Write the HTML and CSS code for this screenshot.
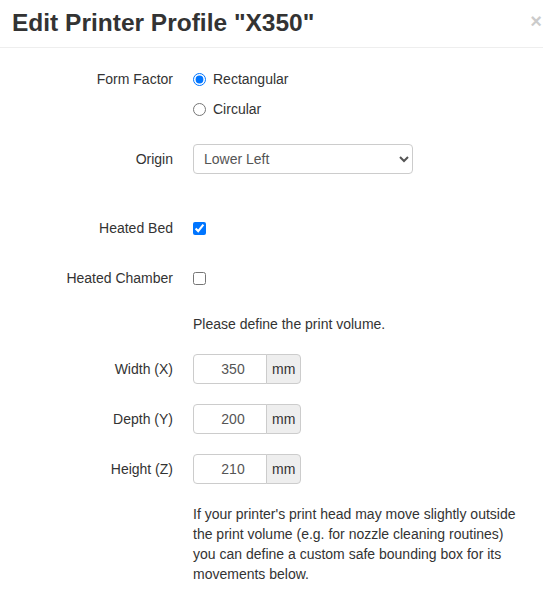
FILE: index.html
```html
<!DOCTYPE html>
<html lang="en">
<head>
<meta charset="utf-8">
<title>Edit Printer Profile</title>
<link rel="stylesheet" href="styles.css">
</head>
<body>
<div class="modal">
  <div class="modal-header">
    <h3 class="modal-title">Edit Printer Profile "X350"</h3>
    <button type="button" class="close" aria-label="Close">&times;</button>
  </div>
  <div class="modal-body">
    <form class="form-horizontal">
      <div class="group group-radios">
        <label class="control-label">Form Factor</label>
        <div class="controls controls-stack">
          <label class="radio"><input type="radio" name="ff" checked> Rectangular</label>
          <label class="radio"><input type="radio" name="ff"> Circular</label>
        </div>
      </div>
      <div class="group group-origin">
        <label class="control-label">Origin</label>
        <div class="controls">
          <select class="select">
            <option>Lower Left</option>
            <option>Center</option>
          </select>
        </div>
      </div>
      <div class="group">
        <label class="control-label">Heated Bed</label>
        <div class="controls controls-check">
          <input type="checkbox" class="check" checked>
        </div>
      </div>
      <div class="group">
        <label class="control-label">Heated Chamber</label>
        <div class="controls controls-check">
          <input type="checkbox" class="check">
        </div>
      </div>
      <div class="group group-info">
        <div class="spacer"></div>
        <div class="controls info">Please define the print volume.</div>
      </div>
      <div class="group">
        <label class="control-label">Width (X)</label>
        <div class="controls">
          <div class="input-append"><input type="text" class="num" value="350"><span class="add-on">mm</span></div>
        </div>
      </div>
      <div class="group">
        <label class="control-label">Depth (Y)</label>
        <div class="controls">
          <div class="input-append"><input type="text" class="num" value="200"><span class="add-on">mm</span></div>
        </div>
      </div>
      <div class="group">
        <label class="control-label">Height (Z)</label>
        <div class="controls">
          <div class="input-append"><input type="text" class="num" value="210"><span class="add-on">mm</span></div>
        </div>
      </div>
      <div class="group group-last">
        <div class="spacer"></div>
        <p class="controls help">If your printer's print head may move slightly outside the print volume (e.g. for nozzle cleaning routines) you can define a custom safe bounding box for its movements below.</p>
      </div>
    </form>
  </div>
</div>
</body>
</html>
```

FILE: styles.css
```css
html, body {
  margin: 0;
  padding: 0;
  background: #fff;
}
body {
  font-family: "Liberation Sans", Arial, Helvetica, sans-serif;
  font-size: 14px;
  line-height: 20px;
  color: #333;
}
.modal {
  width: 543px;
  overflow: hidden;
}
.modal-header {
  display: flex;
  justify-content: space-between;
  align-items: flex-start;
  padding: 8px 1px 9px 12px;
  border-bottom: 1px solid #eee;
}
.modal-title {
  margin: 0;
  font-size: 24.5px;
  line-height: 30px;
  font-weight: bold;
  color: #333;
}
.close {
  margin: 0;
  padding: 0;
  border: 0;
  background: transparent;
  font-family: "Liberation Sans", Arial, sans-serif;
  font-size: 20px;
  font-weight: bold;
  line-height: 20px;
  color: #000;
  opacity: 0.2;
  text-shadow: 0 1px 0 #fff;
  margin-top: 3px;
  cursor: pointer;
}
.modal-body {
  padding: 16px 15px 0 13px;
}
.form-horizontal {
  margin: 0;
}
.group {
  display: grid;
  grid-template-columns: 160px 1fr;
  column-gap: 20px;
  margin-bottom: 20px;
}
.control-label {
  padding-top: 5px;
  text-align: right;
  line-height: 20px;
}
.controls {
  margin: 0;
}
.controls-stack {
  display: flex;
  flex-direction: column;
  gap: 10px;
  padding-top: 5px;
}
.group-radios {
  margin-bottom: 25px;
}
.radio {
  display: flex;
  align-items: center;
  gap: 7px;
  height: 20px;
}
.radio input {
  margin: 0;
  width: 13px;
  height: 13px;
}
.group-origin {
  margin-bottom: 39px;
}
.select {
  width: 220px;
  height: 30px;
  padding: 4px 6px;
  border: 1px solid #ccc;
  border-radius: 4px;
  background: #fff;
  color: #555;
  font-family: "Liberation Sans", Arial, sans-serif;
  font-size: 14px;
  box-sizing: border-box;
}
.controls-check {
  display: flex;
  align-items: center;
  height: 20px;
  padding: 5px 0;
}
.check {
  margin: 0;
  width: 13px;
  height: 13px;
}
.group-info {
  padding-top: 1px;
}
.info {
  line-height: 20px;
}
.input-append {
  display: flex;
  height: 30px;
}
.num {
  box-sizing: border-box;
  width: 74px;
  height: 30px;
  padding: 4px 3px 4px 9px;
  border: 1px solid #ccc;
  border-radius: 4px 0 0 4px;
  font-family: "Liberation Sans", Arial, sans-serif;
  font-size: 14px;
  color: #555;
  text-align: center;
  margin: 0;
}
.add-on {
  box-sizing: border-box;
  height: 30px;
  padding: 4px 5px;
  margin-left: -1px;
  border: 1px solid #ccc;
  border-radius: 0 4px 4px 0;
  background: #eee;
  color: #333;
  line-height: 20px;
}
.group-last {
  margin-bottom: 0;
}
.help {
  margin: 0;
  line-height: 20px;
}
```
